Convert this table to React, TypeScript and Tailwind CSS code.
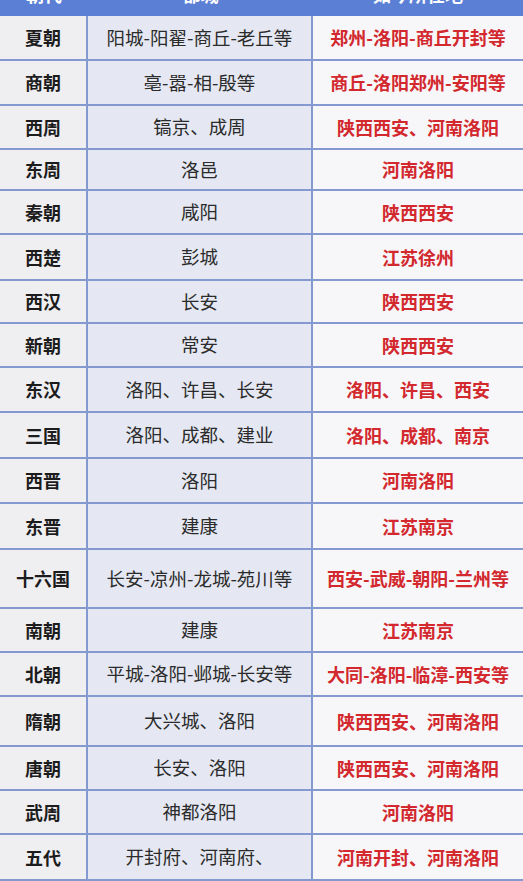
import React from 'react';

// 朝代 / 都城 / 如今所在地
const rows: { era: string; capital: string; now: string; h: string }[] = [
  { era: '夏朝', capital: '阳城-阳翟-商丘-老丘等', now: '郑州-洛阳-商丘开封等', h: 'h-[45px]' },
  { era: '商朝', capital: '亳-嚣-相-殷等', now: '商丘-洛阳郑州-安阳等', h: 'h-[45px]' },
  { era: '西周', capital: '镐京、成周', now: '陕西西安、河南洛阳', h: 'h-[44px]' },
  { era: '东周', capital: '洛邑', now: '河南洛阳', h: 'h-[41px]' },
  { era: '秦朝', capital: '咸阳', now: '陕西西安', h: 'h-[44px]' },
  { era: '西楚', capital: '彭城', now: '江苏徐州', h: 'h-[46px]' },
  { era: '西汉', capital: '长安', now: '陕西西安', h: 'h-[43px]' },
  { era: '新朝', capital: '常安', now: '陕西西安', h: 'h-[44px]' },
  { era: '东汉', capital: '洛阳、许昌、长安', now: '洛阳、许昌、西安', h: 'h-[45px]' },
  { era: '三国', capital: '洛阳、成都、建业', now: '洛阳、成都、南京', h: 'h-[46px]' },
  { era: '西晋', capital: '洛阳', now: '河南洛阳', h: 'h-[45px]' },
  { era: '东晋', capital: '建康', now: '江苏南京', h: 'h-[46px]' },
  { era: '十六国', capital: '长安-凉州-龙城-苑川等', now: '西安-武威-朝阳-兰州等', h: 'h-[59px]' },
  { era: '南朝', capital: '建康', now: '江苏南京', h: 'h-[44px]' },
  { era: '北朝', capital: '平城-洛阳-邺城-长安等', now: '大同-洛阳-临漳-西安等', h: 'h-[44px]' },
  { era: '隋朝', capital: '大兴城、洛阳', now: '陕西西安、河南洛阳', h: 'h-[50px]' },
  { era: '唐朝', capital: '长安、洛阳', now: '陕西西安、河南洛阳', h: 'h-[44px]' },
  { era: '武周', capital: '神都洛阳', now: '河南洛阳', h: 'h-[44px]' },
  { era: '五代', capital: '开封府、河南府、', now: '河南开封、河南洛阳', h: 'h-[46px]' },
];

export default function App() {
  return (
    <div
      className="w-[523px] h-[881px] overflow-hidden bg-white"
      style={{ fontFamily: '"Noto Sans CJK SC", "Noto Sans", sans-serif' }}
    >
      {/* header row is scrolled mostly out of view in the screenshot */}
      <div className="-mt-[28px] h-[44px] bg-[#5b7fd5] grid grid-cols-[88px_225px_1fr] items-center text-[18px] font-bold text-white">
        <div className="text-center">朝代</div>
        <div className="text-center">都城</div>
        <div className="text-center">如今所在地</div>
      </div>
      {rows.map((r) => (
        <div key={r.era} className={`grid grid-cols-[88px_225px_1fr] border-b-2 border-[#8499cf] ${r.h}`}>
          <div className="flex items-center justify-center bg-[#efeff2] border-r-2 border-[#8499cf] text-[18px] font-bold text-[#1c1c1c]">
            {r.era}
          </div>
          <div className="flex items-center justify-center bg-[#e5e8f2] border-r-2 border-[#8499cf] text-[18.5px] text-[#2b2b2b]">
            {r.capital}
          </div>
          <div className="flex items-center justify-center bg-[#f7f7f9] text-[18px] font-bold text-[#d2282e]">
            {r.now}
          </div>
        </div>
      ))}
    </div>
  );
}
